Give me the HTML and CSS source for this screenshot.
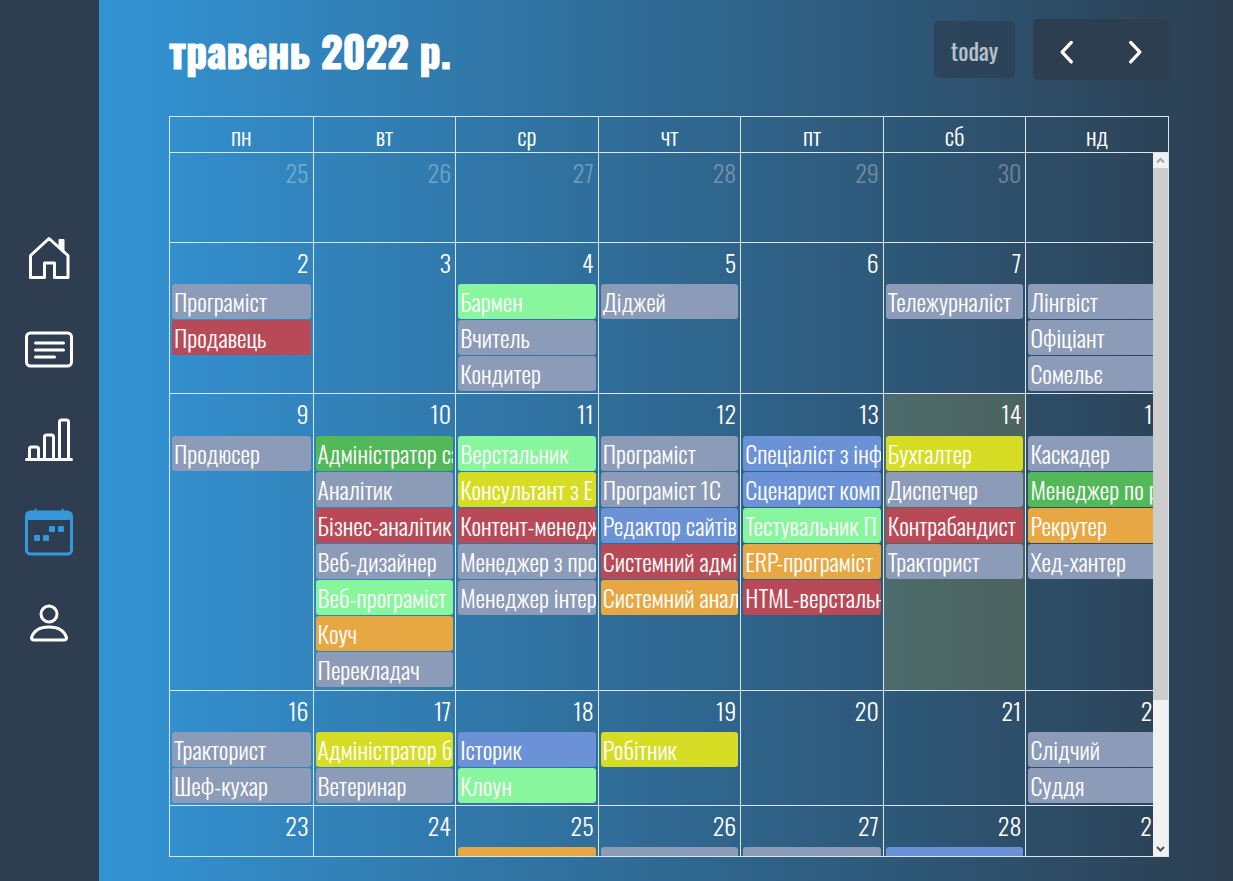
FILE: index.html
```
<!DOCTYPE html>
<html lang="uk">
<head>
<meta charset="utf-8">
<title>Календар</title>
<link rel="stylesheet" href="styles.css">
</head>
<body>
<nav class="sidebar" aria-label="Меню">
  <a href="#home" aria-label="Головна"><svg class="icon" viewBox="0 0 48 48"><path d="M5.500 42.500V20.500L24 3.500 43 20.500V42.500H29.500V28H19.500V42.500Z"/><path class="solid" d="M34.500 5h4v12l-4-4z"/></svg></a>
  <a href="#news" aria-label="Новини"><svg class="icon" viewBox="0 0 48 48"><rect x="1.500" y="7" width="45" height="33" rx="4"/><path d="M10.500 17h28M10.500 24h28M10.500 31h19"/></svg></a>
  <a href="#stats" aria-label="Статистика"><svg class="icon" viewBox="0 0 48 48"><path d="M1.500 42.500h45M4.500 42V32q0-2 2-2h5q2 0 2 2v10M19.500 42V20q0-2 2-2h5q2 0 2 2v22M34.500 42V5q0-2 2-2h5q2 0 2 2v37"/></svg></a>
  <a class="active" href="#calendar" aria-label="Календар"><svg class="icon" viewBox="0 0 48 48"><rect x="1.500" y="4" width="45" height="42" rx="4"/><path class="solid" d="M3 5h42v6H3zM10.500 1.500v3M37.500 1.500v3M25 19h4v4h-4zM34 19h4v4h-4zM10 28h4v4h-4zM19 28h4v4h-4z"/></svg></a>
  <a href="#profile" aria-label="Профіль"><svg class="icon" viewBox="0 0 48 48"><circle cx="24" cy="15" r="8"/><path d="M9 41q-2.500 0-2.500-2.500C9 31 15 28 24 28s15 3 17.500 10.500q0 2.500-2.500 2.500Z"/></svg></a>
</nav>
<main class="content">
  <header class="toolbar">
    <h1 class="title">травень 2022 р.</h1>
    <div class="controls">
      <button class="today" type="button" disabled>today</button>
      <div class="pager">
        <button type="button" aria-label="Попередній місяць"><svg class="chevron" viewBox="0 0 24 24"><path d="M16 5 7.500 14 16 23"/></svg></button>
        <button type="button" aria-label="Наступний місяць"><svg class="chevron" viewBox="0 0 24 24"><path d="M8 5l8.500 9L8 23"/></svg></button>
      </div>
    </div>
  </header>
  <section class="calendar">
    <div class="viewport">
      <table class="grid">
        <thead><tr><th>пн</th><th>вт</th><th>ср</th><th>чт</th><th>пт</th><th>сб</th><th>нд</th></tr></thead>
        <tbody>
          <tr>
            <td class="other"><div class="day">25</div></td>
            <td class="other"><div class="day">26</div></td>
            <td class="other"><div class="day">27</div></td>
            <td class="other"><div class="day">28</div></td>
            <td class="other"><div class="day">29</div></td>
            <td class="other"><div class="day">30</div></td>
            <td><div class="day"></div></td>
          </tr>
          <tr>
            <td><div class="day">2</div><a href="#e" class="event gray">Програміст</a><a href="#e" class="event red">Продавець</a></td>
            <td><div class="day">3</div></td>
            <td><div class="day">4</div><a href="#e" class="event mint">Бармен</a><a href="#e" class="event gray">Вчитель</a><a href="#e" class="event gray">Кондитер</a></td>
            <td><div class="day">5</div><a href="#e" class="event gray">Діджей</a></td>
            <td><div class="day">6</div></td>
            <td><div class="day">7</div><a href="#e" class="event gray">Тележурналіст</a></td>
            <td><div class="day"></div><a href="#e" class="event gray">Лінгвіст</a><a href="#e" class="event gray">Офіціант</a><a href="#e" class="event gray">Сомельє</a></td>
          </tr>
          <tr class="tall">
            <td><div class="day">9</div><a href="#e" class="event gray">Продюсер</a></td>
            <td><div class="day">10</div><a href="#e" class="event green">Адміністратор са</a><a href="#e" class="event gray">Аналітик</a><a href="#e" class="event red">Бізнес-аналітик</a><a href="#e" class="event gray">Веб-дизайнер</a><a href="#e" class="event mint">Веб-програміст</a><a href="#e" class="event orange">Коуч</a><a href="#e" class="event gray">Перекладач</a></td>
            <td><div class="day">11</div><a href="#e" class="event mint">Верстальник</a><a href="#e" class="event yellow">Консультант з E</a><a href="#e" class="event red">Контент-менедж</a><a href="#e" class="event gray">Менеджер з про</a><a href="#e" class="event gray">Менеджер інтер</a></td>
            <td><div class="day">12</div><a href="#e" class="event gray">Програміст</a><a href="#e" class="event gray">Програміст 1С</a><a href="#e" class="event blue">Редактор сайтів</a><a href="#e" class="event red">Системний адмі</a><a href="#e" class="event orange">Системний анал</a></td>
            <td><div class="day">13</div><a href="#e" class="event blue">Спеціаліст з інф</a><a href="#e" class="event blue">Сценарист комп</a><a href="#e" class="event mint">Тестувальник П</a><a href="#e" class="event orange">ERP-програміст</a><a href="#e" class="event red">HTML-верстальн</a></td>
            <td class="current"><div class="day">14</div><a href="#e" class="event yellow">Бухгалтер</a><a href="#e" class="event gray">Диспетчер</a><a href="#e" class="event red">Контрабандист</a><a href="#e" class="event gray">Тракторист</a></td>
            <td><div class="day">15</div><a href="#e" class="event gray">Каскадер</a><a href="#e" class="event green">Менеджер по р</a><a href="#e" class="event orange">Рекрутер</a><a href="#e" class="event gray">Хед-хантер</a></td>
          </tr>
          <tr>
            <td><div class="day">16</div><a href="#e" class="event gray">Тракторист</a><a href="#e" class="event gray">Шеф-кухар</a></td>
            <td><div class="day">17</div><a href="#e" class="event yellow">Адміністратор б</a><a href="#e" class="event gray">Ветеринар</a></td>
            <td><div class="day">18</div><a href="#e" class="event blue">Історик</a><a href="#e" class="event mint">Клоун</a></td>
            <td><div class="day">19</div><a href="#e" class="event yellow">Робітник</a></td>
            <td><div class="day">20</div></td>
            <td><div class="day">21</div></td>
            <td><div class="day">22</div><a href="#e" class="event gray">Слідчий</a><a href="#e" class="event gray">Суддя</a></td>
          </tr>
          <tr>
            <td><div class="day">23</div></td>
            <td><div class="day">24</div></td>
            <td><div class="day">25</div><div class="event orange"></div></td>
            <td><div class="day">26</div><div class="event gray"></div></td>
            <td><div class="day">27</div><div class="event gray"></div></td>
            <td><div class="day">28</div><div class="event blue"></div></td>
            <td><div class="day">29</div></td>
          </tr>
        </tbody>
      </table>
    </div>
    <div class="scrollbar" aria-hidden="true">
      <svg class="arrow dim" viewBox="0 0 15 15"><path d="M4 9.500 7.500 6 11 9.500"/></svg>
      <div class="track"><div class="thumb"></div></div>
      <svg class="arrow" viewBox="0 0 15 15"><path d="M4 6l3.500 3.500L11 6"/></svg>
    </div>
  </section>
</main>
</body>
</html>
```
FILE: styles.css
```
* { box-sizing: border-box; }
body {
  margin: 0;
  height: 100vh;
  display: flex;
  overflow: hidden;
  color: #fff;
  font-family: Oswald, "Roboto Condensed", "Liberation Sans Narrow", "Liberation Sans", sans-serif;
  background: #2c3e50;
}
.sidebar {
  flex: 0 0 99px;
  display: flex;
  flex-direction: column;
  align-items: center;
  justify-content: center;
  gap: 43px;
  padding-right: 2px;
  background: #2e3e50;
}
.sidebar a { display: block; height: 48px; color: #fff; }
.sidebar .active { color: #3498db; }
.icon {
  width: 48px;
  height: 48px;
  fill: none;
  stroke: currentColor;
  stroke-width: 3;
  stroke-linecap: round;
  stroke-linejoin: round;
}
.icon .solid { fill: currentColor; stroke-width: 2; }
.content {
  flex: 1;
  min-width: 0;
  display: flex;
  flex-direction: column;
  padding: 19px 64px 24px 70px;
  background: linear-gradient(to right, #3394d5, #2c3e50);
}
.toolbar {
  display: flex;
  justify-content: space-between;
  align-items: center;
  height: 61px;
  margin-bottom: 36px;
}
.title { margin: 0; font-size: 42px; line-height: 60px; font-weight: 700; -webkit-text-stroke: 1px #fff; }
.controls { display: flex; align-items: center; gap: 18px; }
button { border: 0; padding: 0; color: #fff; background: #2c3e50; font-family: inherit; }
.today {
  width: 81px;
  height: 57px;
  border-radius: 5px;
  font-size: 24px;
  font-weight: 400;
  opacity: 0.65;
}
.pager { display: flex; }
.pager button { width: 68px; height: 61px; display: flex; align-items: center; justify-content: center; }
.pager button:first-child { border-radius: 5px 0 0 5px; }
.pager button:last-child { border-radius: 0 5px 5px 0; }
.chevron { width: 26px; height: 26px; fill: none; stroke: #fff; stroke-width: 3; stroke-linecap: round; stroke-linejoin: round; overflow: visible; }
.calendar { position: relative; flex: 1; min-height: 0; border: 1px solid #d8e8f2; }
.viewport { height: 100%; overflow: hidden; }
.grid { width: 100%; table-layout: fixed; border-spacing: 0; border-collapse: separate; }
.grid th, .grid td { padding: 0; border-left: 1px solid #d8e8f2; border-bottom: 1px solid #d8e8f2; }
.grid th:first-child, .grid td:first-child { border-left: 0; }
.grid th { height: 36px; padding-top: 2px; font-size: 24px; line-height: 33px; font-weight: 300; }
.grid td { height: 90px; vertical-align: top; padding-bottom: 1px; }
.grid .tall td { height: 297px; padding-top: 1px; }
.current { background: rgba(255, 220, 40, 0.15); }
.day { height: 41px; padding: 0 4px; text-align: right; font-size: 24px; font-weight: 300; line-height: 38px; }
.tall .day { line-height: 36px; }
.other .day { opacity: 0.3; }
.event {
  display: block;
  height: 35px;
  margin: 0 2px 1px;
  padding: 0 2px;
  border-radius: 3px;
  overflow: hidden;
  white-space: nowrap;
  color: #fff;
  font-size: 24px;
  font-weight: 300;
  line-height: 35px;
  text-decoration: none;
}
.gray { background: #8c9bb7; }
.red { background: #b84a57; }
.mint { background: #87f69c; }
.yellow { background: #d6dd24; }
.green { background: #53b857; }
.blue { background: #6b92d6; }
.orange { background: #e7a844; }
.scrollbar {
  position: absolute;
  top: 36px;
  right: 0;
  bottom: 0;
  width: 15px;
  display: flex;
  flex-direction: column;
  background: #f1f1f1;
}
.track { flex: 1; }
.thumb { height: 79%; background: #cdcdcd; }
.arrow { width: 15px; height: 15px; fill: none; stroke: #505050; stroke-width: 2; }
.arrow.dim { stroke: #a3a3a3; }
```
